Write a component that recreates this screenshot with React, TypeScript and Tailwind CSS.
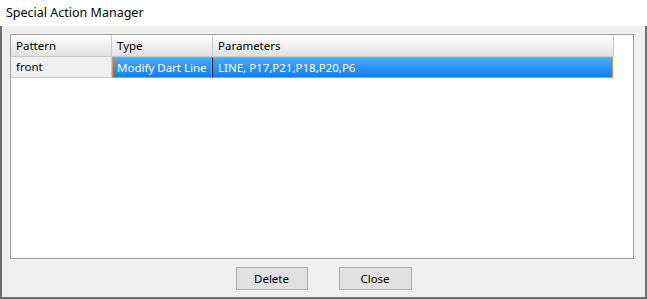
import React from 'react';

const font = { fontFamily: '"Noto Sans", "Malgun Gothic", sans-serif' };

const columns = [
  { key: 'pattern', label: 'Pattern', width: 'w-[101px]' },
  { key: 'type', label: 'Type', width: 'w-[101px]' },
  { key: 'params', label: 'Parameters', width: 'w-[401px]' },
];

export default function App() {
  return (
    <div
      className="w-[647px] h-[299px] flex flex-col bg-white text-black text-[11.5px] overflow-hidden whitespace-nowrap"
      style={font}
    >
      {/* title bar */}
      <div className="h-[26px] shrink-0 flex items-center pl-[6px] text-[12.5px] bg-white">
        Special Action Manager
      </div>

      {/* dialog body */}
      <div className="flex-1 flex flex-col bg-[#f0f0f0] border-x-2 border-b-2 border-[#6f6f6f]">
        <div className="ml-[8px] mr-[11px] mt-[8px] h-[225px] border border-[#a0a0a0] bg-white">
          {/* header */}
          <div className="flex h-[22px]">
            {columns.map((c) => (
              <div
                key={c.key}
                className={`${c.width} h-full flex items-center pl-[5px] border-r border-b border-[#c9c9c9] bg-gradient-to-b from-white to-[#e2e2e2]`}
              >
                {c.label}
              </div>
            ))}
          </div>

          {/* row */}
          <div className="flex h-[21px]">
            <div className="w-[101px] h-full flex items-center pl-[5px] bg-[#f0f0f0] border-r border-b border-[#c9c9c9]">
              front
            </div>
            <div className="w-[100px] h-full flex items-center pl-[4px] overflow-hidden text-white bg-gradient-to-b from-[#47a8ff] to-[#0c7ef2] border border-[#ff8f1f]">
              Modify Dart Line
            </div>
            <div className="w-[401px] h-full flex items-center pl-[5px] text-white bg-gradient-to-b from-[#47a8ff] to-[#0c7ef2] border-y border-r border-[#ff8f1f] border-l border-l-[#1a1a1a]">
              LINE, P17,P21,P18,P20,P6
            </div>
          </div>
        </div>

        {/* buttons */}
        <div className="mt-[8px] flex justify-center gap-[31px]">
          <button className="w-[72px] h-[23px] bg-[#e1e1e1] border border-[#adadad] text-[11.5px] flex items-center justify-center">
            Delete
          </button>
          <button className="w-[73px] h-[23px] bg-[#e1e1e1] border border-[#adadad] text-[11.5px] flex items-center justify-center">
            Close
          </button>
        </div>
      </div>
    </div>
  );
}
